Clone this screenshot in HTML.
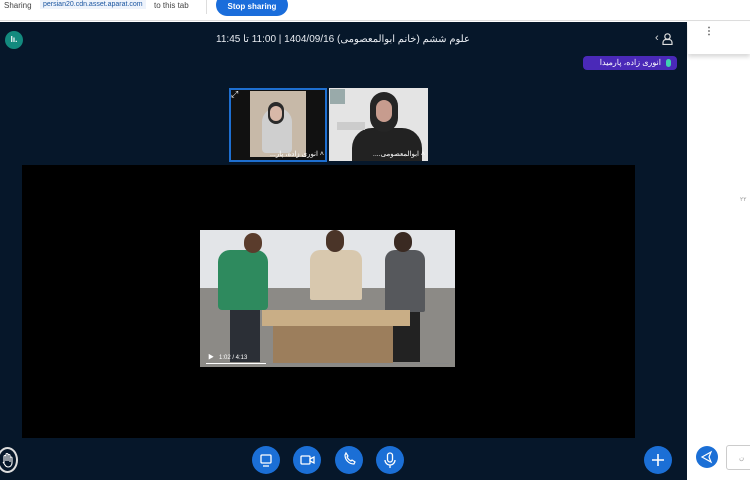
<!DOCTYPE html>
<html><head><meta charset="utf-8"><style>
*{margin:0;padding:0;box-sizing:border-box}
body{width:750px;height:480px;overflow:hidden;background:#fff;font-family:"Liberation Sans","Noto Sans CJK SC",sans-serif;position:relative}
.a{position:absolute}
.btn{position:absolute;width:28px;height:28px;border-radius:50%;background:#1b6fd6;top:446px}
</style></head><body>
<div class="a" style="left:0;top:0;width:750px;height:21px;background:#fff;border-bottom:1px solid #ddd"></div>
<div class="a" style="left:4px;top:1px;font-size:8px;color:#444">Sharing</div>
<div class="a" style="left:40px;top:0px;font-size:7px;color:#1a55a0;background:#eef3fb;padding:1px 3px">persian20.cdn.asset.aparat.com</div>
<div class="a" style="left:154px;top:1px;font-size:8px;color:#444">to this tab</div>
<div class="a" style="left:206px;top:0;width:1px;height:14px;background:#ddd"></div>
<div class="a" style="left:216px;top:-6px;width:72px;height:22px;border-radius:11px;background:#1a6ddb;color:#fff;font-size:8px;font-weight:bold;text-align:center;line-height:26px">Stop sharing</div>

<div class="a" style="left:0;top:22px;width:687px;height:458px;background:#06172a"></div>
<div class="a" style="left:687px;top:22px;width:63px;height:458px;background:#fff"></div>
<div class="a" style="left:688px;top:22px;width:62px;height:32px;box-shadow:0 3px 4px rgba(0,0,0,.15)"></div>
<div class="a" style="left:704px;top:26px;font-size:10px;color:#555;font-weight:bold">⋮</div>
<div class="a" style="left:740px;top:196px;font-size:6px;color:#999">۲۲</div>

<div class="a" style="left:5px;top:31px;width:18px;height:18px;border-radius:50%;background:#138a7e;color:#fff;font-size:8px;font-weight:bold;text-align:center;line-height:18px">lı.</div>
<div class="a" dir="rtl" style="left:200px;width:286px;text-align:center;top:34px;font-size:10px;color:#e8ecf2">علوم ششم (خانم ابوالمعصومی) 1404/09/16 | 11:00 تا 11:45</div>
<div class="a" style="left:655px;top:32px;font-size:11px;color:#ddd">‹</div>
<svg class="a" style="left:662px;top:33px" width="11" height="12" viewBox="0 0 11 12"><circle cx="5.5" cy="3.5" r="2.7" fill="none" stroke="#ddd" stroke-width="1.2"/><path d="M1 11.5v-2a3 3 0 0 1 3-3h3a3 3 0 0 1 3 3v2z" fill="none" stroke="#ddd" stroke-width="1.2"/></svg>
<div class="a" dir="rtl" style="left:583px;top:56px;width:94px;height:14px;border-radius:4px;background:#4a29b8;color:#fff;font-size:8px;line-height:14px;padding-right:16px">انوری زاده، پارمیدا</div>
<div class="a" style="left:666px;top:59px;width:5px;height:8px;border-radius:3px;background:#3fd1b0"></div>

<div class="a" style="left:229px;top:88px;width:98px;height:74px;border:2px solid #1e6fd0;background:#111"></div>
<div class="a" style="left:250px;top:91px;width:56px;height:66px;background:#c7b9a8"></div>
<div class="a" style="left:262px;top:108px;width:30px;height:45px;border-radius:14px 14px 4px 4px;background:#cfcfcf"></div>
<div class="a" style="left:268px;top:102px;width:16px;height:22px;border-radius:8px;background:#2a2a2a"></div>
<div class="a" style="left:270px;top:106px;width:12px;height:15px;border-radius:6px;background:#d8b8a8"></div>
<div class="a" style="left:231px;top:89px;font-size:9px;color:#fff">⤢</div>
<div class="a" dir="rtl" style="left:236px;width:88px;top:150px;font-size:7px;color:#fff">˄ انوری زاده، پار...</div>
<div class="a" style="left:329px;top:88px;width:99px;height:73px;background:#e4e4e4"></div>
<div class="a" style="left:330px;top:89px;width:15px;height:15px;background:#9aa"></div>
<div class="a" style="left:352px;top:128px;width:70px;height:33px;border-radius:20px 20px 0 0;background:#222"></div>
<div class="a" style="left:370px;top:92px;width:28px;height:40px;border-radius:14px;background:#252525"></div>
<div class="a" style="left:376px;top:100px;width:16px;height:22px;border-radius:8px;background:#c79c8e"></div>
<div class="a" style="left:337px;top:122px;width:28px;height:8px;background:#ccc"></div>
<div class="a" dir="rtl" style="left:332px;width:93px;top:150px;font-size:7px;color:#fff">˄ ابوالمعصومی....</div>

<div class="a" style="left:22px;top:165px;width:613px;height:273px;background:#000"></div>
<div class="a" style="left:200px;top:230px;width:255px;height:137px;background:#e3e5e8;overflow:hidden">
 <div class="a" style="left:0;top:58px;width:255px;height:79px;background:#8c8a86"></div>
 <div class="a" style="left:18px;top:20px;width:50px;height:60px;border-radius:12px 12px 4px 4px;background:#2e8a5e"></div>
 <div class="a" style="left:44px;top:3px;width:18px;height:20px;border-radius:9px;background:#5a3c2c"></div>
 <div class="a" style="left:30px;top:80px;width:30px;height:52px;background:#2b2f36"></div>
 <div class="a" style="left:110px;top:20px;width:52px;height:50px;border-radius:10px 10px 2px 2px;background:#d8c8ae"></div>
 <div class="a" style="left:126px;top:0;width:18px;height:22px;border-radius:9px;background:#4a3428"></div>
 <div class="a" style="left:185px;top:20px;width:40px;height:62px;border-radius:10px 10px 2px 2px;background:#56585c"></div>
 <div class="a" style="left:194px;top:2px;width:18px;height:20px;border-radius:9px;background:#3a2a22"></div>
 <div class="a" style="left:190px;top:82px;width:30px;height:50px;background:#222"></div>
 <div class="a" style="left:62px;top:80px;width:148px;height:16px;background:#c9ae86"></div>
 <div class="a" style="left:73px;top:96px;width:120px;height:38px;background:#9c7e5c"></div>
 <div class="a" style="left:8px;top:122px;font-size:6px;color:#fff">▶ &nbsp; 1:02 / 4:13</div>
 <div class="a" style="left:6px;top:133px;width:243px;height:1px;background:#888"></div>
 <div class="a" style="left:6px;top:133px;width:60px;height:1px;background:#fff"></div>
</div>

<div class="a" style="left:-3px;top:447px;width:21px;height:26px;border:2px solid #ddd;border-radius:50%"><svg width="17" height="22" viewBox="0 0 17 22"><path d="M5 14V7.5a1 1 0 0 1 2 0V12V5.5a1 1 0 0 1 2 0V12V6.5a1 1 0 0 1 2 0V13V9a1 1 0 0 1 2 0v5a4 4 0 0 1-4 4H9a4 4 0 0 1-3-2l-2-3" fill="none" stroke="#fff" stroke-width="1.1"/></svg></div>
<div class="btn" style="left:252px"><svg width="28" height="28"><rect x="9" y="9" width="10" height="8" rx="1" fill="none" stroke="#fff" stroke-width="1.3"/><path d="M11 20h6" stroke="#fff" stroke-width="1.3"/></svg></div>
<div class="btn" style="left:293px"><svg width="28" height="28"><rect x="8" y="10" width="9" height="8" rx="1" fill="none" stroke="#fff" stroke-width="1.3"/><path d="M17 13l4-2v6l-4-2z" fill="none" stroke="#fff" stroke-width="1.3"/></svg></div>
<div class="btn" style="left:335px"><svg width="28" height="28"><path d="M10 9c0 5 4 9 9 9l1-2-3-2-1 1c-2-1-3-2-4-4l1-1-2-3z" fill="none" stroke="#fff" stroke-width="1.2"/></svg></div>
<div class="btn" style="left:376px"><svg width="28" height="28"><rect x="11.5" y="7" width="5" height="9" rx="2.5" fill="none" stroke="#fff" stroke-width="1.3"/><path d="M9 14a5 5 0 0 0 10 0M14 19v3" fill="none" stroke="#fff" stroke-width="1.3"/></svg></div>
<div class="btn" style="left:644px"><svg width="28" height="28"><path d="M14 8v12M8 14h12" stroke="#fff" stroke-width="1.6"/></svg></div>
<div class="a" style="left:696px;top:446px;width:22px;height:22px;border-radius:50%;background:#1b6fd6"><svg width="22" height="22"><path d="M15 6L6 11l9 5-2-5z" fill="none" stroke="#fff" stroke-width="1.2"/></svg></div>
<div class="a" style="left:726px;top:445px;width:30px;height:25px;border:1px solid #ccc;border-radius:3px;font-size:7px;color:#aaa;padding:8px 0 0 12px">ن</div>
</body></html>
